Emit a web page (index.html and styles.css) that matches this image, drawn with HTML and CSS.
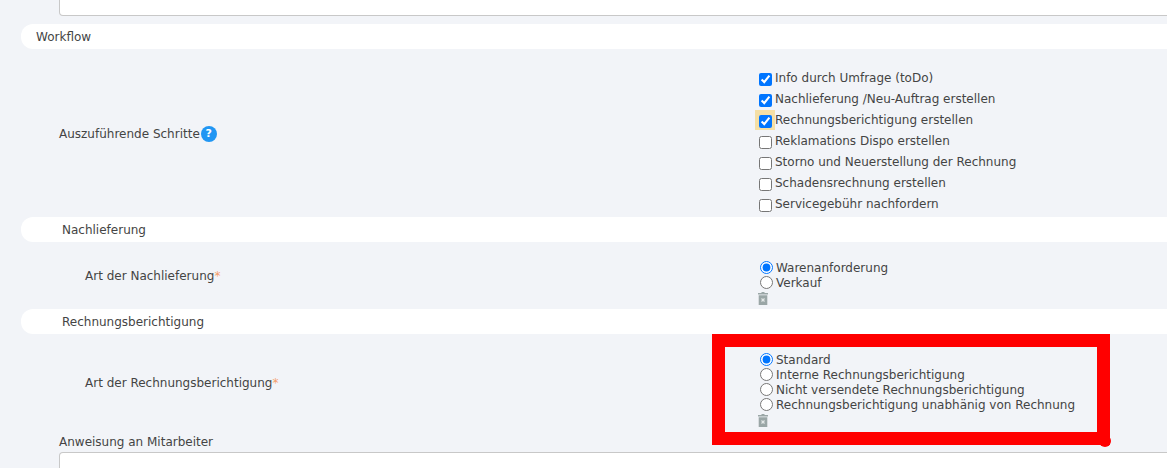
FILE: index.html
```html
<!DOCTYPE html>
<html lang="de">
<head>
    <meta charset="UTF-8">
    <link rel="stylesheet" href="styles.css">
    <title>Workflow</title>
</head>
<body>
    <div class="page">
        <div class="field-box top-box"></div>

        <div class="section-bar">Workflow</div>
        <div class="form-row steps-row">
            <div class="row-label">Auszuführende Schritte<span class="help-icon">?</span></div>
            <div class="check-list">
                <label class="check-item"><span class="check-wrap"><input type="checkbox" checked></span>Info durch Umfrage (toDo)</label>
                <label class="check-item"><span class="check-wrap"><input type="checkbox" checked></span>Nachlieferung /Neu-Auftrag erstellen</label>
                <label class="check-item"><span class="check-wrap focused"><input type="checkbox" checked></span>Rechnungsberichtigung erstellen</label>
                <label class="check-item"><span class="check-wrap"><input type="checkbox"></span>Reklamations Dispo erstellen</label>
                <label class="check-item"><span class="check-wrap"><input type="checkbox"></span>Storno und Neuerstellung der Rechnung</label>
                <label class="check-item"><span class="check-wrap"><input type="checkbox"></span>Schadensrechnung erstellen</label>
                <label class="check-item"><span class="check-wrap"><input type="checkbox"></span>Servicegebühr nachfordern</label>
            </div>
        </div>

        <div class="section-bar sub">Nachlieferung</div>
        <div class="form-row delivery-row">
            <div class="row-label sub">Art der Nachlieferung<span class="required">*</span></div>
            <div class="radio-list">
                <label class="radio-item"><input type="radio" name="delivery" checked>Warenanforderung</label>
                <label class="radio-item"><input type="radio" name="delivery">Verkauf</label>
                <svg class="trash-icon" viewBox="0 0 10 13"><path d="M3.5 0h3v1H10v1.5H0V1h3.5zM.7 3.2h8.6V13H.7z" fill="#9aa6a6"/><path d="M3.5 6.5l3 3M6.5 6.5l-3 3" stroke="#e4e8e8" stroke-width="1.2"/></svg>
            </div>
        </div>

        <div class="section-bar sub">Rechnungsberichtigung</div>
        <div class="form-row invoice-row">
            <div class="row-label sub">Art der Rechnungsberichtigung<span class="required">*</span></div>
            <div class="radio-list">
                <label class="radio-item"><input type="radio" name="invoice" checked>Standard</label>
                <label class="radio-item"><input type="radio" name="invoice">Interne Rechnungsberichtigung</label>
                <label class="radio-item"><input type="radio" name="invoice">Nicht versendete Rechnungsberichtigung</label>
                <label class="radio-item"><input type="radio" name="invoice">Rechnungsberichtigung unabhänig von Rechnung</label>
                <svg class="trash-icon" viewBox="0 0 10 13"><path d="M3.5 0h3v1H10v1.5H0V1h3.5zM.7 3.2h8.6V13H.7z" fill="#9aa6a6"/><path d="M3.5 6.5l3 3M6.5 6.5l-3 3" stroke="#e4e8e8" stroke-width="1.2"/></svg>
            </div>
        </div>

        <div class="note-label">Anweisung an Mitarbeiter</div>
        <div class="field-box bottom-box"></div>
    </div>

    <div class="red-frame"></div>
    <div class="red-dot"></div>
</body>
</html>
```

FILE: styles.css
```css
html, body {
    margin: 0;
    padding: 0;
    height: 468px;
    overflow: hidden;
}

body {
    background-color: #f2f4f8;
    font-family: "DejaVu Sans", sans-serif;
    font-size: 12px;
    color: #444;
    position: relative;
}

.page {
    padding-left: 21px;
}

.field-box {
    margin: 0 -10px 0 38px;
    background-color: #fff;
    border: 1px solid #c8c8c8;
}

.top-box {
    height: 16px;
    box-sizing: border-box;
    border-top: none;
    border-radius: 0 0 4px 4px;
    margin-bottom: 8px;
}

.bottom-box {
    height: 30px;
    box-sizing: border-box;
    border-bottom: none;
    border-radius: 4px 4px 0 0;
}

.section-bar {
    height: 25px;
    line-height: 26px;
    background-color: #fff;
    border-radius: 12px 0 0 12px;
    padding-left: 15px;
}

.section-bar.sub {
    padding-left: 41px;
}

.form-row {
    display: flex;
    align-items: center;
    padding-left: 38px;
}

.steps-row {
    height: 168px;
}

.delivery-row {
    height: 67px;
}

.invoice-row {
    height: 96px;
}

.row-label {
    width: 700px;
    flex-shrink: 0;
}

.steps-row .row-label,
.invoice-row .row-label {
    margin-top: 2px;
}

.row-label.sub {
    padding-left: 26px;
    box-sizing: border-box;
}

.help-icon {
    display: inline-block;
    width: 16px;
    height: 16px;
    line-height: 16px;
    margin-left: 1px;
    border-radius: 50%;
    background-color: #2196f3;
    color: #fff;
    font-size: 11px;
    font-weight: bold;
    text-align: center;
    vertical-align: 1px;
}

.required {
    color: #f59e6c;
}

.check-list {
    display: flex;
    flex-direction: column;
    margin-left: -4px;
    margin-top: 16px;
}

.check-item {
    display: flex;
    align-items: center;
    height: 21px;
}

.check-wrap {
    display: flex;
    align-items: center;
    justify-content: center;
    width: 20px;
    height: 20px;
}

.check-wrap.focused {
    background-color: #f5dfa5;
}

.check-wrap input {
    margin: 2px 0 0 0;
}

.radio-list {
    display: flex;
    flex-direction: column;
    margin-top: 14px;
}

.invoice-row .radio-list {
    margin-top: 15px;
}

.radio-item {
    display: flex;
    align-items: center;
    height: 15px;
}

.radio-item input {
    margin: 0 3px 0 1px;
}

.trash-icon {
    display: block;
    width: 10px;
    height: 13px;
    margin: 2px 0 0 -1px;
}

.note-label {
    padding: 3px 0 0 38px;
    height: 19px;
    line-height: 19px;
}

.red-frame {
    position: absolute;
    left: 712px;
    top: 334px;
    width: 398px;
    height: 111px;
    box-sizing: border-box;
    border: 13px solid #f00;
}

.red-dot {
    position: absolute;
    left: 1099px;
    top: 435px;
    width: 12px;
    height: 12px;
    border-radius: 50%;
    background-color: #f00;
}
```
